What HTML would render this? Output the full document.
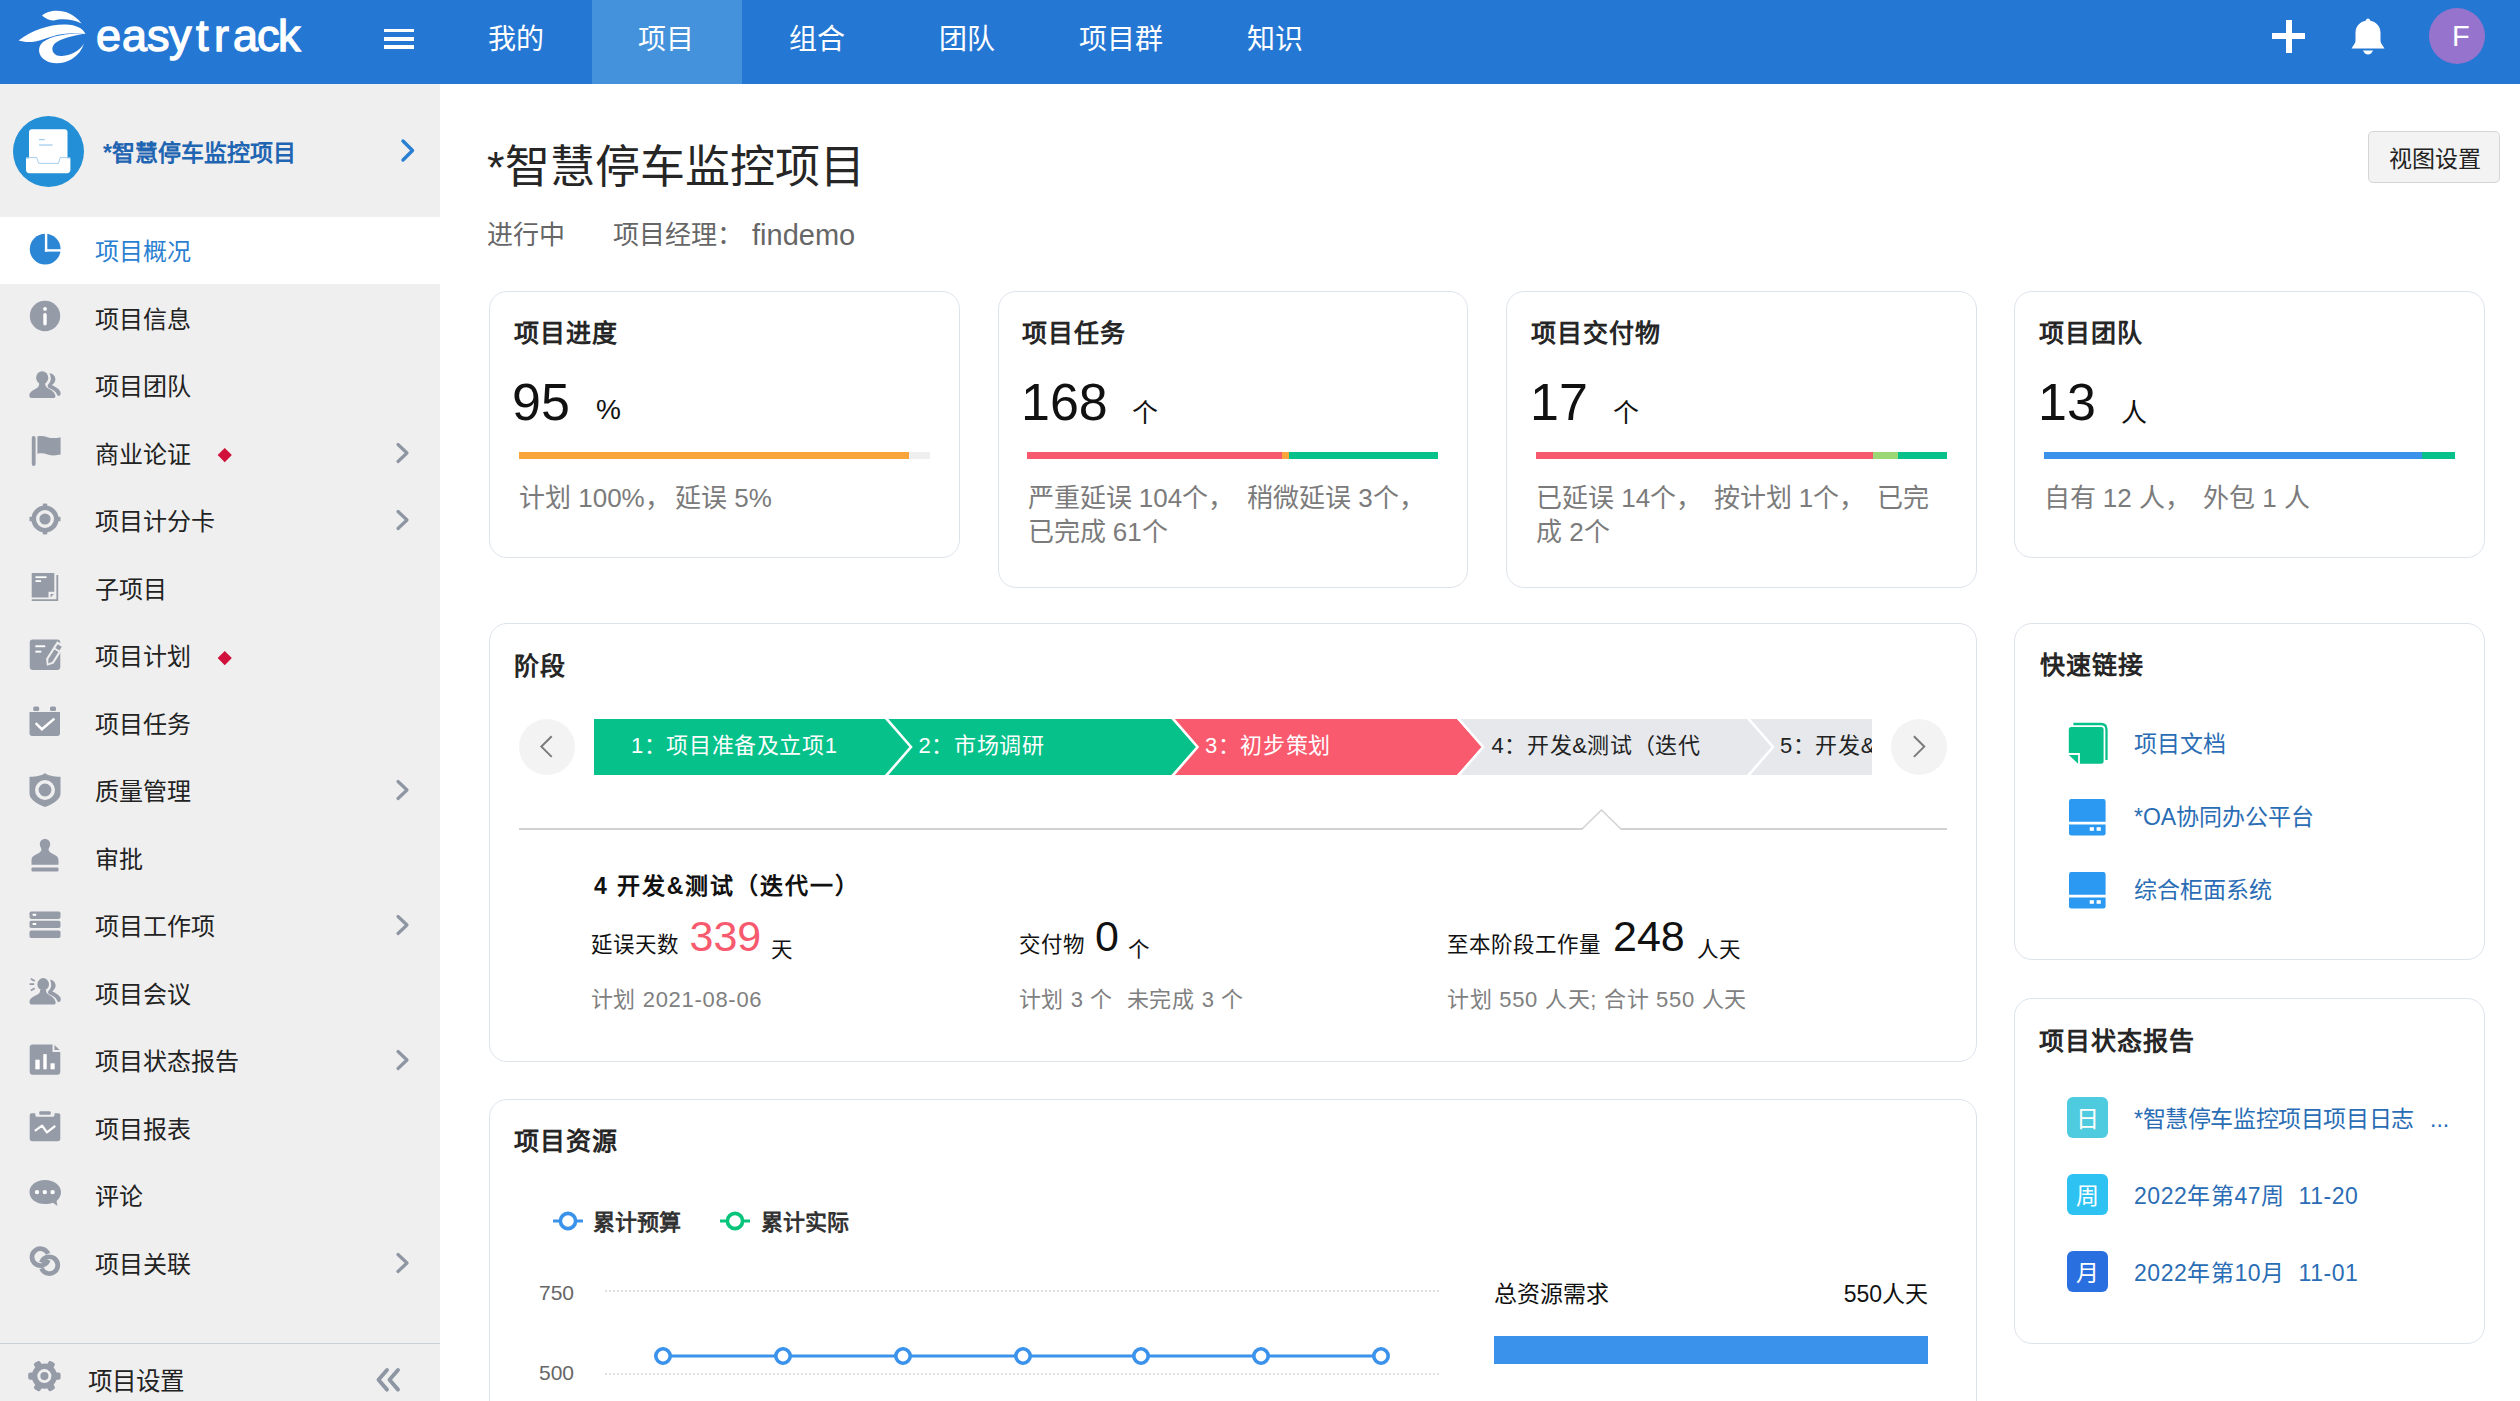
<!DOCTYPE html>
<html lang="zh-CN">
<head>
<meta charset="utf-8">
<style>
*{box-sizing:border-box;margin:0;padding:0}
html,body{width:2520px;height:1401px;overflow:hidden;background:#fff}
body{position:relative;font-family:"Liberation Sans",sans-serif;color:#222}
.a{position:absolute;white-space:nowrap;line-height:1}
#hdr{position:absolute;left:0;top:0;width:2520px;height:84px;background:#2577d4}
#side{position:absolute;left:0;top:84px;width:440px;height:1317px;background:#efefef}
.nav{position:absolute;top:26px;font-size:28px;color:#fff;line-height:1}
.card{position:absolute;border:1.5px solid #dde3ec;border-radius:18px;background:#fff}
.ct{position:absolute;font-size:25px;letter-spacing:1px;font-weight:bold;color:#262626;line-height:1;white-space:nowrap}
.si{position:absolute;left:0;width:440px;height:67.5px}
.si .tx{position:absolute;left:95px;top:23.5px;font-size:24px;color:#222;line-height:1;white-space:nowrap}
.si svg.ic{position:absolute;left:28.5px;top:16px;width:32px;height:32px}
.si .chev{position:absolute;left:394.5px;top:22.5px;width:16px;height:22px}
.si .dia{position:absolute;left:220px;top:31px;width:9.5px;height:9.5px;background:#d0103a;transform:rotate(45deg)}
.big{font-size:52px;color:#111}
.unit{font-size:26px;color:#111}
.gt{font-size:26px;color:#7b7b7b}
.stt{font-size:22px;letter-spacing:0.6px}
.lb{font-size:21.5px;color:#111}
.bn{font-size:43px}
.gs{font-size:22px;color:#808080;white-space:pre;letter-spacing:0.7px}
.lg{font-size:22px;font-weight:bold;color:#333}
.ax{font-size:21px;color:#666}
.lk{font-size:23px;color:#2a6db5;white-space:pre}
.sq{width:41px;height:41px;border-radius:6px;color:#fff;font-size:23px;text-align:center;line-height:44px}
</style>
</head>
<body>
<!-- HEADER -->
<div id="hdr">
  <svg class="a" style="left:0;top:0" width="90" height="84" viewBox="0 0 90 84">
    <path d="M42 15.5 C50 8.5 70 7.5 81.5 23.5 C72 18.5 60 18.5 54 20.5 C50 20.5 45 18.5 42 15.5 Z" fill="#fff"/>
    <path d="M18.5 40.5 C32 30 50 24 66 24.5 C76 25 83 28 85.5 34 C76 32.5 62 33 52 36.5 C44 39 38 41.5 32 42 C26 42.3 22 41.5 18.5 40.5 Z" fill="#fff"/>
    <path d="M85 33.5 C70 33 52 35 43 42 C37 47 38 56 45 60 C52 65 64 64 72 59 C78 55 82 50 84 43.5 C80 50 72 55.5 62 56 C54 56.5 51 51 53 46 C56 40 68 36.5 85 33.5 Z" fill="#fff"/>
  </svg>
  <div class="a" id="logo" style="left:96px;top:13px;font-size:45px;color:#fff;-webkit-text-stroke:1.3px #fff;width:210px;height:60px"><span style="position:absolute;left:0px;top:0">e</span><span style="position:absolute;left:26px;top:0">a</span><span style="position:absolute;left:51px;top:0">s</span><span style="position:absolute;left:73px;top:0">y</span><span style="position:absolute;left:100px;top:0">t</span><span style="position:absolute;left:118px;top:0">r</span><span style="position:absolute;left:137px;top:0">a</span><span style="position:absolute;left:161px;top:0">c</span><span style="position:absolute;left:182px;top:0">k</span></div>
  <div class="a" style="left:384px;top:28.6px;width:30.4px;height:3.4px;background:#fff"></div>
  <div class="a" style="left:384px;top:37px;width:30.4px;height:3.6px;background:#fff"></div>
  <div class="a" style="left:384px;top:45.2px;width:30.4px;height:3.6px;background:#fff"></div>
  <div class="a" style="left:592px;top:0;width:150px;height:84px;background:#4592dc"></div>
  <div class="nav" style="left:488px">我的</div>
  <div class="nav" style="left:638px">项目</div>
  <div class="nav" style="left:789px">组合</div>
  <div class="nav" style="left:939px">团队</div>
  <div class="nav" style="left:1079px">项目群</div>
  <div class="nav" style="left:1247px">知识</div>
  <div class="a" style="left:2272px;top:33px;width:33px;height:6px;background:#fff"></div>
  <div class="a" style="left:2285.5px;top:20px;width:6px;height:33px;background:#fff"></div>
  <svg class="a" style="left:2351px;top:18px" width="34" height="37" viewBox="0 0 34 37">
    <path d="M17 0.5 C15.5 0.5 15 1.5 15 2.5 C9 4 4.5 8 4.5 15 L4.5 23 C4.5 25 2 28 0.5 30.5 L33.5 30.5 C32 28 29.5 25 29.5 23 L29.5 15 C29.5 8 25 4 19 2.5 C19 1.5 18.5 0.5 17 0.5 Z" fill="#fff"/>
    <path d="M12 32.5 L22 32.5 C21 35 19 36.5 17 36.5 C15 36.5 13 35 12 32.5 Z" fill="#fff"/>
  </svg>
  <div class="a" style="left:2429px;top:8px;width:56px;height:56px;border-radius:50%;background:#9673cc"></div>
  <div class="a" style="left:2452px;top:21.5px;font-size:29px;color:#fff">F</div>
</div>

<!-- SIDEBAR -->
<div id="side"></div>
<svg class="a" style="left:13px;top:116px" width="71" height="71" viewBox="13 116 71 71">
  <circle cx="48.5" cy="151.5" r="35.5" fill="#238fd6"/>
  <rect x="29" y="129.3" width="38.5" height="36" rx="3" fill="#fff"/>
  <rect x="39" y="139" width="5.6" height="1.2" fill="#9ccbed"/>
  <rect x="39" y="144.4" width="13.5" height="1.2" fill="#9ccbed"/>
  <path d="M26 158.2 L36.8 158.2 L38.8 164 L58.2 164 L60.2 158.2 L70.4 158.2 L70.4 170 C70.4 171.8 69 173.2 67.2 173.2 L29.2 173.2 C27.4 173.2 26 171.8 26 170 Z" fill="#fff"/>
  <path d="M26 157.6 L36.8 157.6 L38.6 163.4 L58.4 163.4 L60.2 157.6 L70.4 157.6" fill="none" stroke="#9ccbed" stroke-width="0.9"/>
</svg>
<div class="a" style="left:103px;top:142px;font-size:23px;font-weight:bold;color:#1f65b2">*智慧停车监控项目</div>
<svg class="a" style="left:399px;top:138px" width="18" height="26" viewBox="0 0 18 26"><path d="M4 3 L13.5 12.5 L4 22" fill="none" stroke="#2a7fd0" stroke-width="3.4" stroke-linecap="round" stroke-linejoin="round"/></svg>
<div class="si" style="top:216.5px;background:#fff;"><svg class="ic" viewBox="0 0 32 32" style="overflow:visible"><circle cx="16.2" cy="16.2" r="15.4" fill="#2b87d5"/><rect x="15.9" y="-1" width="2.4" height="19.6" fill="#fff"/><rect x="15.9" y="16.2" width="17" height="2.4" fill="#fff"/></svg><div class="tx" style="color:#2a7fd0;">项目概况</div></div>
<div class="si" style="top:284.0px;"><svg class="ic" viewBox="0 0 32 32" style="overflow:visible"><circle cx="16" cy="16" r="15.2" fill="#959ba7"/><circle cx="16" cy="8.9" r="1.9" fill="#fff"/><rect x="14.3" y="13" width="3.4" height="12.4" rx="1.7" fill="#fff"/></svg><div class="tx" style="">项目信息</div></div>
<div class="si" style="top:351.5px;"><svg class="ic" viewBox="0 0 32 32" style="overflow:visible"><ellipse cx="13.2" cy="9.7" rx="6.1" ry="6.4" fill="#959ba7"/><path d="M10.2 15 C10.4 17 9.6 19 7.6 20.2 C5 21.6 0.3 23.6 0.3 27.6 C0.3 29.3 1.3 30.1 3 30.1 L24.2 30.1 C25.8 30.1 26.6 29.3 26.4 27.8 C26 24.5 22.5 22 19 20.2 C16.8 19 16 17 16.2 15 Z" fill="#959ba7"/><path d="M20.4 5.2 C24 5.4 26.4 8 26.4 11.2 C26.4 13.6 25 15.6 22.8 17 C26 18.6 29.6 20.4 31.2 23.4 C32 25 31.6 27.8 29.8 27.8 C28.6 27.8 28.2 27 27.8 26 C26.6 23.2 23.4 21.6 20 20 C18.6 19.4 18.2 17.6 19.2 16.4 C20.8 14.8 21.8 13 21.8 10.8 C21.8 8.6 21.2 6.6 20.4 5.2 Z" fill="#959ba7"/></svg><div class="tx" style="">项目团队</div></div>
<div class="si" style="top:419.0px;"><svg class="ic" viewBox="0 0 32 32" style="overflow:visible"><rect x="2.8" y="1" width="3.8" height="30" rx="1.9" fill="#959ba7"/><path d="M8.4 1.4 C12 0.6 15 1 18.5 2.2 C22.5 3.4 26 3.4 31.6 2.2 L31.6 19.6 C26 20.8 22.5 20.6 18.5 19.4 C15 18.3 12 18 8.4 18.8 Z" fill="#959ba7"/></svg><div class="tx" style="">商业论证</div><div class="dia"></div><svg class="chev" viewBox="0 0 16 22"><path d="M3 2.5 L12 11 L3 19.5" fill="none" stroke="#8e96a3" stroke-width="3.2" stroke-linecap="round" stroke-linejoin="round"/></svg></div>
<div class="si" style="top:486.5px;"><svg class="ic" viewBox="0 0 32 32" style="overflow:visible"><circle cx="16" cy="16" r="11.3" fill="none" stroke="#959ba7" stroke-width="4.6"/><circle cx="16" cy="16" r="5.6" fill="#959ba7"/><rect x="13.8" y="0.6" width="4.4" height="4" fill="#959ba7"/><rect x="13.8" y="27.4" width="4.4" height="4" fill="#959ba7"/><rect x="0.5" y="13.8" width="4" height="4.4" fill="#959ba7"/><rect x="27.5" y="13.8" width="4" height="4.4" fill="#959ba7"/></svg><div class="tx" style="">项目计分卡</div><svg class="chev" viewBox="0 0 16 22"><path d="M3 2.5 L12 11 L3 19.5" fill="none" stroke="#8e96a3" stroke-width="3.2" stroke-linecap="round" stroke-linejoin="round"/></svg></div>
<div class="si" style="top:554.0px;"><svg class="ic" viewBox="0 0 32 32" style="overflow:visible"><path d="M2.7 3 L25.3 3 L25.3 21.8 L19.5 21.8 L19.5 27.5 L2.7 27.5 Z" fill="#959ba7"/><path d="M27.4 5 L29.2 5 L29.2 31 L2.7 31 L2.7 29.3 L27.4 29.3 Z" fill="#959ba7"/><rect x="6.5" y="6.3" width="11" height="1.8" fill="#fff"/><rect x="6.5" y="10.2" width="5.6" height="1.8" fill="#fff"/><path d="M21.6 24 L25 24 L21.6 27.4 Z" fill="#959ba7"/></svg><div class="tx" style="">子项目</div></div>
<div class="si" style="top:621.5px;"><svg class="ic" viewBox="0 0 32 32" style="overflow:visible"><rect x="0.75" y="1.45" width="30.55" height="30.45" rx="3.2" fill="#959ba7"/><rect x="6.4" y="7.3" width="9.8" height="1.9" fill="#fff"/><rect x="6.4" y="12.7" width="5.9" height="1.9" fill="#fff"/><g transform="translate(19.3,25.6) rotate(-57.6)"><path d="M-2.6 0 L3 -4.5 L23.6 -4.5 L23.6 4.5 L3 4.5 Z" fill="#efefef"/><path d="M0 0 L3.8 -2.4 L15.2 -2.4 L15.2 2.4 L3.8 2.4 Z" fill="#959ba7"/><rect x="17" y="-2.4" width="4.4" height="4.8" fill="#959ba7"/></g></svg><div class="tx" style="">项目计划</div><div class="dia"></div></div>
<div class="si" style="top:689.0px;"><svg class="ic" viewBox="0 0 32 32" style="overflow:visible"><rect x="4.2" y="1.5" width="6" height="4.4" rx="1.5" fill="#959ba7"/><rect x="21" y="1.5" width="6" height="4.4" rx="1.5" fill="#959ba7"/><path d="M0.5 7 L31 7 L31 28.5 C31 30 30 31 28.5 31 L3 31 C1.5 31 0.5 30 0.5 28.5 Z" fill="#959ba7"/><path d="M6.7 18.2 L12.9 24.2 L25.4 13.6" fill="none" stroke="#fff" stroke-width="2.5"/></svg><div class="tx" style="">项目任务</div></div>
<div class="si" style="top:756.5px;"><svg class="ic" viewBox="0 0 32 32" style="overflow:visible"><path d="M16 0 C13 2.5 8 3.8 0.5 3.8 L0.5 20.5 C0.5 26 7 30.5 16 34 C25 30.5 31.5 26 31.5 20.5 L31.5 3.8 C24 3.8 19 2.5 16 0 Z" fill="#959ba7"/><circle cx="16" cy="17" r="8.2" fill="none" stroke="#efefef" stroke-width="3.6"/></svg><div class="tx" style="">质量管理</div><svg class="chev" viewBox="0 0 16 22"><path d="M3 2.5 L12 11 L3 19.5" fill="none" stroke="#8e96a3" stroke-width="3.2" stroke-linecap="round" stroke-linejoin="round"/></svg></div>
<div class="si" style="top:824.0px;"><svg class="ic" viewBox="0 0 32 32" style="overflow:visible"><path d="M16 -1 C12.8 -1 10.8 1.4 10.8 4.2 C10.8 6.2 12 7.6 12.4 9 C12.8 11 11.5 12.2 8 14 C4.5 15.6 2.5 17 2.5 20 L2.5 24.8 L29.5 24.8 L29.5 20 C29.5 17 27.5 15.6 24 14 C20.5 12.2 19.2 11 19.6 9 C20 7.6 21.2 6.2 21.2 4.2 C21.2 1.4 19.2 -1 16 -1 Z" fill="#959ba7"/><rect x="2.5" y="27.4" width="27" height="4" rx="1.2" fill="#959ba7"/></svg><div class="tx" style="">审批</div></div>
<div class="si" style="top:891.5px;"><svg class="ic" viewBox="0 0 32 32" style="overflow:visible"><rect x="0.5" y="3.5" width="31" height="7.4" rx="1.8" fill="#959ba7"/><rect x="0.5" y="12.7" width="31" height="7.4" rx="1.8" fill="#959ba7"/><rect x="0.5" y="22.4" width="31" height="7.6" rx="1.8" fill="#959ba7"/><rect x="3.6" y="5.8" width="3.6" height="2" fill="#fff"/><rect x="3.6" y="15" width="3.6" height="2" fill="#fff"/></svg><div class="tx" style="">项目工作项</div><svg class="chev" viewBox="0 0 16 22"><path d="M3 2.5 L12 11 L3 19.5" fill="none" stroke="#8e96a3" stroke-width="3.2" stroke-linecap="round" stroke-linejoin="round"/></svg></div>
<div class="si" style="top:959.0px;"><svg class="ic" viewBox="0 0 32 32" style="overflow:visible"><ellipse cx="14.2" cy="9.2" rx="5.8" ry="6.1" fill="#959ba7"/><path d="M11.2 14.5 C11.4 16.5 10.6 18.5 8.6 19.6 C5.5 21.2 0.5 23 0.5 27 C0.5 28.6 1.4 29.6 3 29.6 L24.4 29.6 C26 29.6 26.8 28.8 26.6 27.2 C26.2 24 22.8 21.4 19.6 19.6 C17.6 18.5 16.9 16.5 17.1 14.5 Z" fill="#959ba7"/><path d="M21 4.8 C24.4 5 26.6 7.6 26.6 10.6 C26.6 12.9 25.3 14.8 23.2 16.2 C26.3 17.8 29.8 19.6 31.4 22.6 C32.2 24.2 31.8 27 30 27 C28.8 27 28.4 26.2 28 25.2 C26.8 22.4 23.8 20.8 20.4 19.3 C19 18.7 18.6 16.9 19.6 15.7 C21.2 14.1 22.2 12.4 22.2 10.3 C22.2 8.2 21.7 6.2 21 4.8 Z" fill="#959ba7"/><path d="M1.8 3.7 L5.7 6 M0.6 9.2 L5.2 9.2 M1.8 15.6 L5.7 13.3" stroke="#959ba7" stroke-width="1.7"/></svg><div class="tx" style="">项目会议</div></div>
<div class="si" style="top:1026.5px;"><svg class="ic" viewBox="0 0 32 32" style="overflow:visible"><path d="M0.7 4 C0.7 2.5 1.9 1.5 3.4 1.5 L23.5 1.5 L23.5 9.1 L31.3 9.1 L31.3 29 C31.3 30.6 30.1 31.7 28.6 31.7 L3.4 31.7 C1.9 31.7 0.7 30.6 0.7 29 Z" fill="#959ba7"/><path d="M25.5 1.9 L30.7 7.1 L25.5 7.1 Z" fill="#959ba7"/><rect x="6.3" y="16.7" width="4.4" height="9.6" fill="#fff"/><rect x="14.3" y="11.1" width="3.4" height="15.2" fill="#fff"/><rect x="21.5" y="20.3" width="4.2" height="6" fill="#fff"/></svg><div class="tx" style="">项目状态报告</div><svg class="chev" viewBox="0 0 16 22"><path d="M3 2.5 L12 11 L3 19.5" fill="none" stroke="#8e96a3" stroke-width="3.2" stroke-linecap="round" stroke-linejoin="round"/></svg></div>
<div class="si" style="top:1094.0px;"><svg class="ic" viewBox="0 0 32 32" style="overflow:visible"><path d="M0.7 5.2 C0.7 4 1.5 3.2 2.7 3.2 L6.3 3.2 L6.3 5 C6.3 6.2 7 6.8 8.2 6.8 L23.6 6.8 C24.8 6.8 25.5 6.2 25.5 5 L25.5 3.2 L29.3 3.2 C30.5 3.2 31.3 4 31.3 5.2 L31.3 28.8 C31.3 30.2 30.3 31.2 28.9 31.2 L3.1 31.2 C1.7 31.2 0.7 30.2 0.7 28.8 Z" fill="#959ba7"/><rect x="10.3" y="1.2" width="11.4" height="3.6" rx="1" fill="#959ba7"/><path d="M5.9 20.8 L13.1 15.6 L17.9 22.3 L26.3 15.8" fill="none" stroke="#fff" stroke-width="2.2" stroke-linejoin="round"/></svg><div class="tx" style="">项目报表</div></div>
<div class="si" style="top:1161.5px;"><svg class="ic" viewBox="0 0 32 32" style="overflow:visible"><g transform="translate(0,1.5)"><path d="M16 0.5 C7.2 0.5 0.5 5.5 0.5 12.6 C0.5 19.8 7.2 24.6 16 24.6 C19 24.6 21.8 24 24 23.2 L28.4 26.6 L27.6 21.4 C30.5 19 32 16 32 12.6 C32 5.5 24.8 0.5 16 0.5 Z" fill="#959ba7"/><circle cx="8" cy="12.6" r="2.2" fill="#fff"/><circle cx="15.8" cy="12.6" r="2.2" fill="#fff"/><circle cx="23.6" cy="12.6" r="2.2" fill="#fff"/></g></svg><div class="tx" style="">评论</div></div>
<div class="si" style="top:1229.0px;"><svg class="ic" viewBox="0 0 32 32" style="overflow:visible"><path d="M19.3 15 A8.4 8.4 0 1 1 19.1 8.8" fill="none" stroke="#959ba7" stroke-width="4.7"/><path d="M12.4 17.6 A8.4 8.4 0 1 1 12.6 23.35" fill="none" stroke="#959ba7" stroke-width="4.7"/></svg><div class="tx" style="">项目关联</div><svg class="chev" viewBox="0 0 16 22"><path d="M3 2.5 L12 11 L3 19.5" fill="none" stroke="#8e96a3" stroke-width="3.2" stroke-linecap="round" stroke-linejoin="round"/></svg></div>

<div class="a" style="left:0;top:1342.5px;width:440px;height:1.5px;background:#c9d0da"></div>
<svg class="a" style="left:24px;top:1356px" width="42" height="42" viewBox="0 0 42 42">
  <g transform="translate(20.4,20.1)" fill="#959ba7">
    <circle r="12.6"/>
    <rect x="-3.6" y="-16.2" width="7.2" height="8" rx="2" transform="rotate(90)"/>
    <rect x="-3.6" y="-16.2" width="7.2" height="8" rx="2" transform="rotate(150)"/>
    <rect x="-3.6" y="-16.2" width="7.2" height="8" rx="2" transform="rotate(210)"/>
    <rect x="-3.6" y="-16.2" width="7.2" height="8" rx="2" transform="rotate(270)"/>
    <rect x="-3.6" y="-16.2" width="7.2" height="8" rx="2" transform="rotate(330)"/>
    <rect x="-3.6" y="-16.2" width="7.2" height="8" rx="2" transform="rotate(30)"/>
    <circle r="7" fill="#efefef"/><circle r="4.05"/>
  </g>
</svg>
<div class="a" style="left:88px;top:1369.5px;font-size:24.5px;color:#222">项目设置</div>
<svg class="a" style="left:374px;top:1367px" width="28" height="26" viewBox="0 0 28 26"><path d="M13 3 L4.5 12.8 L13 22.6 M24 3 L15.5 12.8 L24 22.6" fill="none" stroke="#8e96a3" stroke-width="3.9" stroke-linecap="round" stroke-linejoin="round"/></svg>


<!-- MAIN -->
<div class="a" style="left:487px;top:145px;font-size:45px;color:#262626">*智慧停车监控项目</div>
<div class="a" style="left:487px;top:222px;font-size:26px;color:#666">进行中</div>
<div class="a" style="left:613px;top:222px;font-size:26px;color:#666">项目经理：</div>
<div class="a" style="left:752px;top:221px;font-size:29px;color:#666">findemo</div>
<div class="a" style="left:2368px;top:131px;width:132px;height:52px;border:1.5px solid #d5d5d5;border-radius:5px;background:#f3f3f3"></div>
<div class="a" style="left:2389px;top:147.5px;font-size:23px;color:#222">视图设置</div>

<!-- TOP CARDS -->
<div class="card" style="left:489px;top:291px;width:471px;height:267px"></div>
<div class="card" style="left:997.5px;top:291px;width:470.5px;height:296.5px"></div>
<div class="card" style="left:1506px;top:291px;width:471px;height:296.5px"></div>
<div class="card" style="left:2014px;top:291px;width:471px;height:267px"></div>

<div class="ct" style="left:513.5px;top:320.8px">项目进度</div>
<div class="ct" style="left:1022px;top:320.8px">项目任务</div>
<div class="ct" style="left:1530.5px;top:320.8px">项目交付物</div>
<div class="ct" style="left:2039px;top:320.8px">项目团队</div>

<div class="a big" style="left:512px;top:376px">95</div>
<div class="a big" style="left:1021px;top:376px">168</div>
<div class="a big" style="left:1530px;top:376px">17</div>
<div class="a big" style="left:2038px;top:376px">13</div>
<div class="a unit" style="left:596px;top:396px;font-size:28px">%</div>
<div class="a unit" style="left:1132px;top:399.5px">个</div>
<div class="a unit" style="left:1612.5px;top:399.5px">个</div>
<div class="a unit" style="left:2121px;top:399.5px">人</div>

<div class="a" style="left:519px;top:452px;width:411px;height:7px;background:#efefef"></div>
<div class="a" style="left:519px;top:452px;width:390px;height:7px;background:#f9a53b"></div>
<div class="a" style="left:1027px;top:452px;width:255px;height:7px;background:#f75a6e"></div>
<div class="a" style="left:1282px;top:452px;width:7px;height:7px;background:#f9a53b"></div>
<div class="a" style="left:1289px;top:452px;width:149px;height:7px;background:#06c18a"></div>
<div class="a" style="left:1536px;top:452px;width:337px;height:7px;background:#f75a6e"></div>
<div class="a" style="left:1873px;top:452px;width:25px;height:7px;background:#9bd775"></div>
<div class="a" style="left:1898px;top:452px;width:49px;height:7px;background:#06c18a"></div>
<div class="a" style="left:2044px;top:452px;width:378px;height:7px;background:#3a92ea"></div>
<div class="a" style="left:2422px;top:452px;width:33px;height:7px;background:#06c18a"></div>

<div class="a gt" style="left:519px;top:484.8px">计划 100%，</div>
<div class="a gt" style="left:675px;top:484.8px">延误 5%</div>
<div class="a gt" style="left:1027.5px;top:484.8px">严重延误 104个，</div>
<div class="a gt" style="left:1247px;top:484.8px">稍微延误 3个，</div>
<div class="a gt" style="left:1027.5px;top:519.3px">已完成 61个</div>
<div class="a gt" style="left:1536px;top:484.8px">已延误 14个，</div>
<div class="a gt" style="left:1713.5px;top:484.8px">按计划 1个，</div>
<div class="a gt" style="left:1877px;top:484.8px">已完</div>
<div class="a gt" style="left:1536px;top:519.3px">成 2个</div>
<div class="a gt" style="left:2043.5px;top:484.8px">自有 12 人，</div>
<div class="a gt" style="left:2203px;top:484.8px">外包 1 人</div>

<!-- STAGE CARD -->
<div class="card" style="left:489px;top:623px;width:1487.5px;height:438.5px"></div>
<div class="ct" style="left:514px;top:654px">阶段</div>
<div class="a" style="left:519px;top:719px;width:56px;height:56px;border-radius:50%;background:#f3f3f3"></div>
<svg class="a" style="left:538px;top:733px" width="18" height="28" viewBox="0 0 18 28"><path d="M13.7 3.3 L3.4 13.6 L13.7 23.9" fill="none" stroke="#7a7a7a" stroke-width="2"/></svg>
<div class="a" style="left:1891px;top:719px;width:56px;height:56px;border-radius:50%;background:#f3f3f3"></div>
<svg class="a" style="left:1910px;top:733px" width="18" height="28" viewBox="0 0 18 28"><path d="M3.9 3.3 L14.2 13.6 L3.9 23.9" fill="none" stroke="#7a7a7a" stroke-width="2"/></svg>
<svg class="a" style="left:594px;top:719px" width="1278" height="56" viewBox="594 719 1278 56">
  <path d="M594 719 L885 719 L911 747 L885 775 L594 775 Z" fill="#06c18a"/>
  <path d="M885 719 L1171.5 719 L1197.5 747 L1171.5 775 L885 775 L911 747 Z" fill="#06c18a"/>
  <path d="M1171.5 719 L1457 719 L1483 747 L1457 775 L1171.5 775 L1197.5 747 Z" fill="#f95a6e"/>
  <path d="M1457 719 L1747 719 L1773 747 L1747 775 L1457 775 L1483 747 Z" fill="#e6e8ec"/>
  <path d="M1747 719 L1900 719 L1900 775 L1747 775 L1773 747 Z" fill="#e6e8ec"/>
  <path d="M885 717 L911 747 L885 777" fill="none" stroke="#fff" stroke-width="2.6"/>
  <path d="M1171.5 717 L1197.5 747 L1171.5 777" fill="none" stroke="#fff" stroke-width="2.6"/>
  <path d="M1457 717 L1483 747 L1457 777" fill="none" stroke="#fff" stroke-width="2.6"/>
  <path d="M1747 717 L1773 747 L1747 777" fill="none" stroke="#fff" stroke-width="2.6"/>
</svg>
<div class="a stt" style="left:631px;top:735px;color:#fff">1：项目准备及立项1</div>
<div class="a stt" style="left:918.5px;top:735px;color:#fff">2：市场调研</div>
<div class="a stt" style="left:1205px;top:735px;color:#fff">3：初步策划</div>
<div class="a" style="left:1480px;top:700px;width:392px;height:90px;overflow:hidden">
  <div class="a stt" style="left:11.5px;top:35px;color:#222">4：开发&amp;测试（迭代</div>
  <div class="a stt" style="left:300px;top:35px;color:#222">5：开发&amp;测试（迭代二）</div>
</div>
<div class="a" style="left:519px;top:828px;width:1428px;height:1.5px;background:#d2d2d2"></div>
<svg class="a" style="left:1580px;top:806px" width="44" height="26" viewBox="1580 806 44 26">
  <path d="M1582 830 L1601.5 810 L1621 830 Z" fill="#fff"/>
  <path d="M1582 829 L1601.5 810 L1621 829" fill="none" stroke="#d2d2d2" stroke-width="1.5"/>
</svg>
<div class="a" style="left:594px;top:875px;font-size:23px;font-weight:bold;color:#111;letter-spacing:1.9px">4 开发&amp;测试（迭代一）</div>
<div class="a lb" style="left:590.5px;top:935px">延误天数</div>
<div class="a bn" style="left:689.5px;top:915px;color:#f75a6e">339</div>
<div class="a lb" style="left:771px;top:940px">天</div>
<div class="a gs" style="left:590.5px;top:988.5px">计划 2021-08-06</div>
<div class="a lb" style="left:1018.5px;top:935px">交付物</div>
<div class="a bn" style="left:1095px;top:915px;color:#111">0</div>
<div class="a lb" style="left:1128px;top:940px">个</div>
<div class="a gs" style="left:1018.5px;top:988.5px">计划 3 个  未完成 3 个</div>
<div class="a lb" style="left:1447px;top:935px">至本阶段工作量</div>
<div class="a bn" style="left:1613px;top:915px;color:#111">248</div>
<div class="a lb" style="left:1697px;top:940px">人天</div>
<div class="a gs" style="left:1447px;top:988.5px">计划 550 人天; 合计 550 人天</div>

<!-- RESOURCE CARD -->
<div class="card" style="left:489px;top:1099px;width:1487.5px;height:400px"></div>
<div class="ct" style="left:514px;top:1128.5px">项目资源</div>
<svg class="a" style="left:550px;top:1208px" width="40" height="26" viewBox="0 0 40 26"><path d="M3 13 L33 13" stroke="#3a92ea" stroke-width="3"/><circle cx="18" cy="13" r="7.6" fill="#fff" stroke="#3a92ea" stroke-width="3.6"/></svg>
<div class="a lg" style="left:593px;top:1211.5px">累计预算</div>
<svg class="a" style="left:717px;top:1208px" width="40" height="26" viewBox="0 0 40 26"><path d="M3 13 L33 13" stroke="#06c47a" stroke-width="3"/><circle cx="18" cy="13" r="7.6" fill="#fff" stroke="#06c47a" stroke-width="3.6"/></svg>
<div class="a lg" style="left:760.5px;top:1211.5px">累计实际</div>
<div class="a ax" style="left:539px;top:1282px">750</div>
<div class="a ax" style="left:539px;top:1362px">500</div>
<div class="a" style="left:605px;top:1290px;width:834px;height:0;border-top:2px dotted #e0e0e0"></div>
<div class="a" style="left:605px;top:1372.5px;width:834px;height:0;border-top:2px dotted #e0e0e0"></div>
<svg class="a" style="left:640px;top:1330px" width="770" height="50" viewBox="640 1330 770 50">
  <path d="M663 1356 L1381 1356" stroke="#3a92ea" stroke-width="3"/>
  <g fill="#fff" stroke="#3a92ea" stroke-width="3.6">
  <circle cx="663" cy="1356" r="7.2"/><circle cx="783" cy="1356" r="7.2"/><circle cx="903" cy="1356" r="7.2"/><circle cx="1023" cy="1356" r="7.2"/><circle cx="1141" cy="1356" r="7.2"/><circle cx="1261" cy="1356" r="7.2"/><circle cx="1381" cy="1356" r="7.2"/>
  </g>
</svg>
<div class="a lb" style="left:1494px;top:1283px;font-size:23px">总资源需求</div>
<div class="a lb" style="left:1840px;top:1283px;font-size:23px;width:88px;text-align:right">550人天</div>
<div class="a" style="left:1494px;top:1336px;width:434px;height:28px;background:#3a92ea"></div>

<!-- QUICK LINKS -->
<div class="card" style="left:2014px;top:623px;width:471px;height:336.5px"></div>
<div class="ct" style="left:2039.5px;top:653px">快速链接</div>
<svg class="a" style="left:2068px;top:722px" width="42" height="44" viewBox="0 0 42 44">
  <path d="M5.4 2 L33 2 Q38.5 2 38.5 7.5 L38.5 38" fill="none" stroke="#06c18a" stroke-width="2.3"/>
  <path d="M0.8 7.5 Q0.8 5 3.3 5 L33.1 5 Q35.6 5 35.6 7.5 L35.6 39.2 Q35.6 41.7 33.1 41.7 L11.9 41.7 L11.9 31 L0.8 31 Z" fill="#06c18a"/>
  <path d="M0.8 32.9 L10.1 32.9 L10.1 41.7 Z" fill="#06c18a"/>
</svg>
<div class="a lk" style="left:2134px;top:733px">项目文档</div>
<svg class="a" style="left:2069px;top:799px" width="37" height="37" viewBox="0 0 37 37">
  <path d="M0 2.4 Q0 0 2.4 0 L34.2 0 Q36.6 0 36.6 2.4 L36.6 22.7 L0 22.7 Z" fill="#2b99f2"/>
  <path d="M0 25.5 L36.6 25.5 L36.6 34.2 Q36.6 36.6 34.2 36.6 L2.4 36.6 Q0 36.6 0 34.2 Z" fill="#2b99f2"/>
  <rect x="20.7" y="28.2" width="4.2" height="3.6" fill="#fff"/><rect x="27.6" y="28.2" width="4.2" height="3.6" fill="#fff"/>
</svg>
<div class="a lk" style="left:2134px;top:806px">*OA协同办公平台</div>
<svg class="a" style="left:2069px;top:872px" width="37" height="37" viewBox="0 0 37 37">
  <path d="M0 2.4 Q0 0 2.4 0 L34.2 0 Q36.6 0 36.6 2.4 L36.6 22.7 L0 22.7 Z" fill="#2b99f2"/>
  <path d="M0 25.5 L36.6 25.5 L36.6 34.2 Q36.6 36.6 34.2 36.6 L2.4 36.6 Q0 36.6 0 34.2 Z" fill="#2b99f2"/>
  <rect x="20.7" y="28.2" width="4.2" height="3.6" fill="#fff"/><rect x="27.6" y="28.2" width="4.2" height="3.6" fill="#fff"/>
</svg>
<div class="a lk" style="left:2134px;top:879px">综合柜面系统</div>

<!-- STATUS REPORT -->
<div class="card" style="left:2014px;top:998px;width:471px;height:346px"></div>
<div class="ct" style="left:2039px;top:1029px">项目状态报告</div>
<div class="a sq" style="left:2067px;top:1097px;background:#4fcbe0">日</div>
<div class="a lk" style="left:2134px;top:1108px;letter-spacing:-0.4px">*智慧停车监控项目项目日志</div><div class="a lk" style="left:2430px;top:1108px">...</div>
<div class="a sq" style="left:2067px;top:1174px;background:#2ec2f2">周</div>
<div class="a lk" style="left:2134px;top:1185px;letter-spacing:0.55px">2022年第47周  11-20</div>
<div class="a sq" style="left:2067px;top:1251px;background:#2a6fe0">月</div>
<div class="a lk" style="left:2134px;top:1262px;letter-spacing:0.55px">2022年第10月  11-01</div>

</body>
</html>
